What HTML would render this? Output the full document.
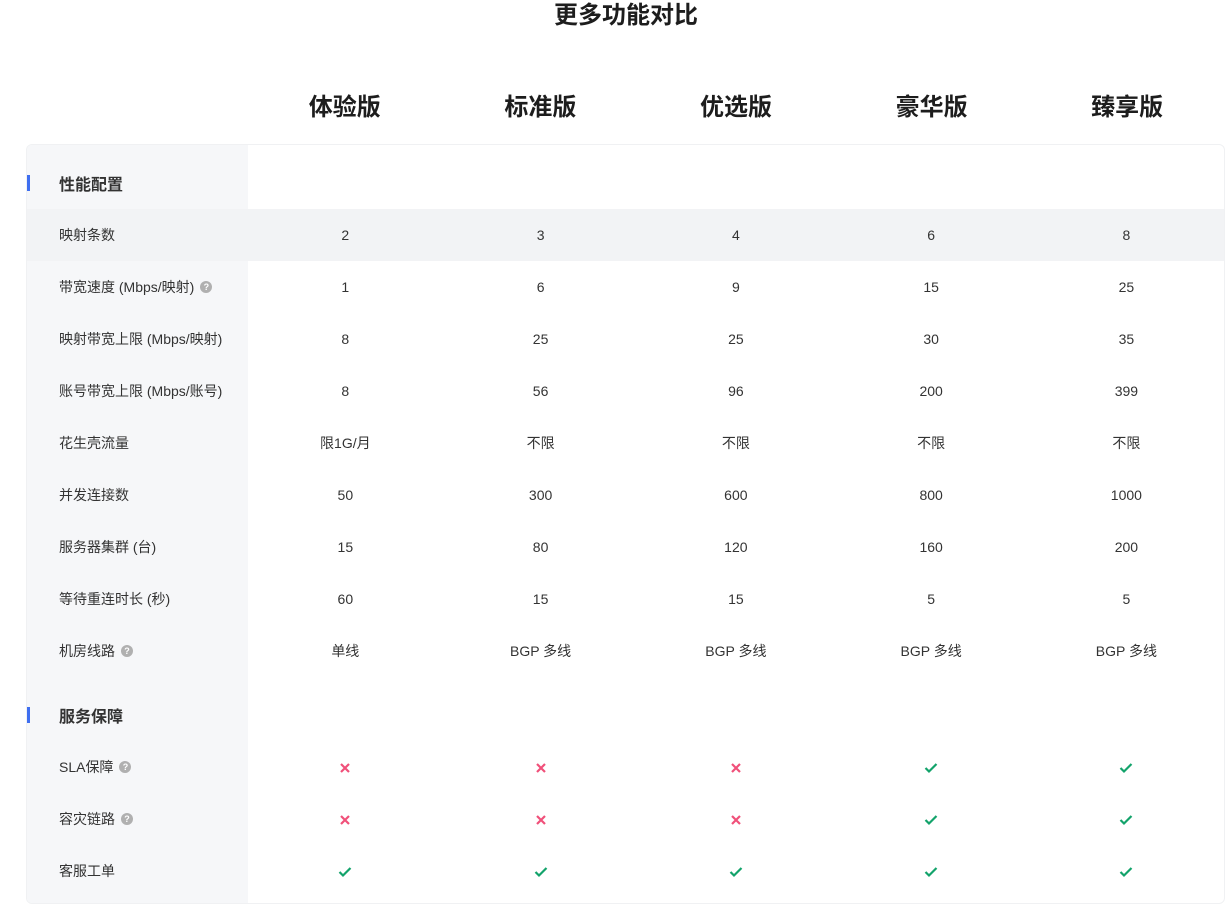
<!DOCTYPE html>
<html><head><meta charset="utf-8"><style>
*{margin:0;padding:0;box-sizing:border-box}
body{width:1226px;height:897px;overflow:hidden;background:#fff;font-family:"Liberation Sans","Noto Sans CJK SC",sans-serif;color:#222;position:relative}
.title{position:absolute;top:2px;left:13px;width:1226px;text-align:center;font-size:24px;font-weight:bold;line-height:28px;color:#1d1d1d}
.plans{position:absolute;top:91px;left:247px;display:flex}
.plans div{width:195.6px;text-align:center;font-size:24px;font-weight:bold;line-height:34px;color:#1d1d1d}
.card{position:absolute;left:26px;top:144px;width:1199px;height:760px;border:1px solid #f0f1f3;border-radius:6px;overflow:hidden}
.leftbg{position:absolute;left:0;top:0;width:221px;height:100%;background:#f6f7f9}
.row{position:absolute;left:0;width:100%;height:52px;display:flex;align-items:center;font-size:14px}
.row.hl{background:#f2f3f5}
.row .l{width:221px;padding-left:32px;color:#333;display:flex;align-items:center}
.row .c{width:195.6px;text-align:center;color:#333}
.sec{font-size:16px;font-weight:bold;color:#1d1d1d}
.bar{position:absolute;left:0;width:3px;height:16px;background:#3f6ff0}
.q{display:inline-block;width:12px;height:12px;border-radius:50%;background:#b0b0b0;color:#fff;font-size:9px;line-height:12px;text-align:center;margin-left:6px;font-weight:bold}
svg{vertical-align:middle}
</style></head><body>
<div class="title">更多功能对比</div>
<div class="plans"><div>体验版</div><div>标准版</div><div>优选版</div><div>豪华版</div><div>臻享版</div></div>
<div class="card"><div class="leftbg"></div>
<div class="row" style="top:12px"><div class="bar" style="top:18px"></div><div class="l sec">性能配置</div></div>
<div class="row hl" style="top:64px"><div class="l">映射条数</div><div class="c">2</div><div class="c">3</div><div class="c">4</div><div class="c">6</div><div class="c">8</div></div>
<div class="row" style="top:116px"><div class="l">带宽速度 (Mbps/映射)<span class="q">?</span></div><div class="c">1</div><div class="c">6</div><div class="c">9</div><div class="c">15</div><div class="c">25</div></div>
<div class="row" style="top:168px"><div class="l">映射带宽上限 (Mbps/映射)</div><div class="c">8</div><div class="c">25</div><div class="c">25</div><div class="c">30</div><div class="c">35</div></div>
<div class="row" style="top:220px"><div class="l">账号带宽上限 (Mbps/账号)</div><div class="c">8</div><div class="c">56</div><div class="c">96</div><div class="c">200</div><div class="c">399</div></div>
<div class="row" style="top:272px"><div class="l">花生壳流量</div><div class="c">限1G/月</div><div class="c">不限</div><div class="c">不限</div><div class="c">不限</div><div class="c">不限</div></div>
<div class="row" style="top:324px"><div class="l">并发连接数</div><div class="c">50</div><div class="c">300</div><div class="c">600</div><div class="c">800</div><div class="c">1000</div></div>
<div class="row" style="top:376px"><div class="l">服务器集群 (台)</div><div class="c">15</div><div class="c">80</div><div class="c">120</div><div class="c">160</div><div class="c">200</div></div>
<div class="row" style="top:428px"><div class="l">等待重连时长 (秒)</div><div class="c">60</div><div class="c">15</div><div class="c">15</div><div class="c">5</div><div class="c">5</div></div>
<div class="row" style="top:480px"><div class="l">机房线路<span class="q">?</span></div><div class="c">单线</div><div class="c">BGP 多线</div><div class="c">BGP 多线</div><div class="c">BGP 多线</div><div class="c">BGP 多线</div></div>
<div class="row" style="top:544px"><div class="bar" style="top:18px"></div><div class="l sec">服务保障</div></div>
<div class="row" style="top:596px"><div class="l">SLA保障<span class="q">?</span></div>
<div class="c"><svg width="12" height="12"><path d="M2 2L10 10M10 2L2 10" stroke="#f0507a" stroke-width="2.2"/></svg></div>
<div class="c"><svg width="12" height="12"><path d="M2 2L10 10M10 2L2 10" stroke="#f0507a" stroke-width="2.2"/></svg></div>
<div class="c"><svg width="12" height="12"><path d="M2 2L10 10M10 2L2 10" stroke="#f0507a" stroke-width="2.2"/></svg></div>
<div class="c"><svg width="14" height="12"><path d="M1.5 6L5 9.5L12.5 2" fill="none" stroke="#13a36b" stroke-width="2.2"/></svg></div>
<div class="c"><svg width="14" height="12"><path d="M1.5 6L5 9.5L12.5 2" fill="none" stroke="#13a36b" stroke-width="2.2"/></svg></div></div>
<div class="row" style="top:648px"><div class="l">容灾链路<span class="q">?</span></div>
<div class="c"><svg width="12" height="12"><path d="M2 2L10 10M10 2L2 10" stroke="#f0507a" stroke-width="2.2"/></svg></div>
<div class="c"><svg width="12" height="12"><path d="M2 2L10 10M10 2L2 10" stroke="#f0507a" stroke-width="2.2"/></svg></div>
<div class="c"><svg width="12" height="12"><path d="M2 2L10 10M10 2L2 10" stroke="#f0507a" stroke-width="2.2"/></svg></div>
<div class="c"><svg width="14" height="12"><path d="M1.5 6L5 9.5L12.5 2" fill="none" stroke="#13a36b" stroke-width="2.2"/></svg></div>
<div class="c"><svg width="14" height="12"><path d="M1.5 6L5 9.5L12.5 2" fill="none" stroke="#13a36b" stroke-width="2.2"/></svg></div></div>
<div class="row" style="top:700px"><div class="l">客服工单</div>
<div class="c"><svg width="14" height="12"><path d="M1.5 6L5 9.5L12.5 2" fill="none" stroke="#13a36b" stroke-width="2.2"/></svg></div>
<div class="c"><svg width="14" height="12"><path d="M1.5 6L5 9.5L12.5 2" fill="none" stroke="#13a36b" stroke-width="2.2"/></svg></div>
<div class="c"><svg width="14" height="12"><path d="M1.5 6L5 9.5L12.5 2" fill="none" stroke="#13a36b" stroke-width="2.2"/></svg></div>
<div class="c"><svg width="14" height="12"><path d="M1.5 6L5 9.5L12.5 2" fill="none" stroke="#13a36b" stroke-width="2.2"/></svg></div>
<div class="c"><svg width="14" height="12"><path d="M1.5 6L5 9.5L12.5 2" fill="none" stroke="#13a36b" stroke-width="2.2"/></svg></div></div>
</div>
</body></html>
